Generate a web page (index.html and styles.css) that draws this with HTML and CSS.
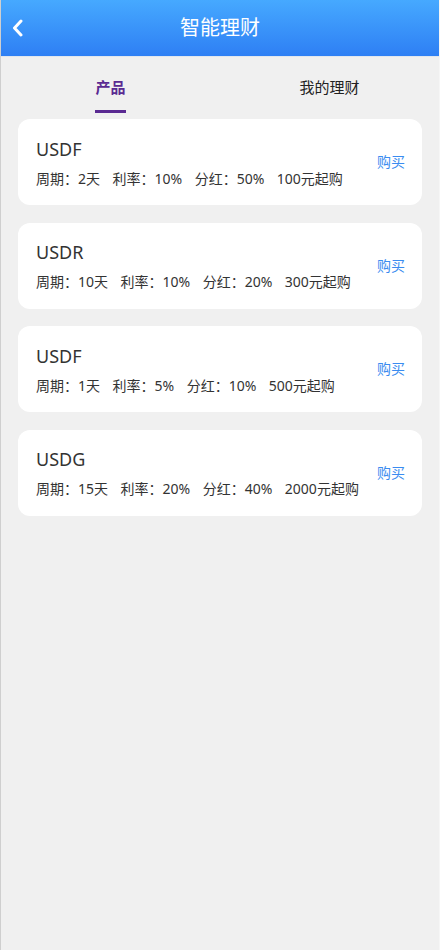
FILE: index.html
```html
<!DOCTYPE html>
<html lang="zh-CN">
<head>
<meta charset="utf-8">
<title>智能理财</title>
<link rel="stylesheet" href="styles.css">
</head>
<body>
<div class="page">
  <header class="topbar">
    <span class="back">
      <svg width="14" height="18" viewBox="0 0 14 18"><path d="M10 2 L3.5 9 L10 16" fill="none" stroke="#fff" stroke-width="3" stroke-linecap="round" stroke-linejoin="round"/></svg>
    </span>
    <h1 class="title">智能理财</h1>
  </header>
  <nav class="tabs">
    <div class="tab active"><span class="tab-label">产品</span></div>
    <div class="tab"><span class="tab-label">我的理财</span></div>
  </nav>
  <main class="list">
    <div class="card">
      <div class="info">
        <div class="name">USDF</div>
        <div class="detail"><span>周期：2天</span><span>利率：10%</span><span>分红：50%</span><span>100元起购</span></div>
      </div>
      <a class="buy">购买</a>
    </div>
    <div class="card">
      <div class="info">
        <div class="name">USDR</div>
        <div class="detail"><span>周期：10天</span><span>利率：10%</span><span>分红：20%</span><span>300元起购</span></div>
      </div>
      <a class="buy">购买</a>
    </div>
    <div class="card">
      <div class="info">
        <div class="name">USDF</div>
        <div class="detail"><span>周期：1天</span><span>利率：5%</span><span>分红：10%</span><span>500元起购</span></div>
      </div>
      <a class="buy">购买</a>
    </div>
    <div class="card">
      <div class="info">
        <div class="name">USDG</div>
        <div class="detail"><span>周期：15天</span><span>利率：20%</span><span>分红：40%</span><span>2000元起购</span></div>
      </div>
      <a class="buy">购买</a>
    </div>
  </main>
</div>
</body>
</html>
```
FILE: styles.css
```css
html, body {
  margin: 0;
  padding: 0;
  height: 100%;
}
body {
  background: #f0f0f0;
  font-family: "Noto Sans", "Noto Sans CJK SC", sans-serif;
  color: #333;
}
.page {
  min-height: 100%;
  border-left: 1px solid #cfcfcf;
  border-right: 1px solid #f6f6f6;
  box-sizing: border-box;
}
.topbar {
  height: 56px;
  background: linear-gradient(180deg, #46a9ff 0%, #2e7ff4 100%);
  border-bottom: 1px solid #dfe6ee;
  display: flex;
  align-items: center;
  justify-content: center;
  position: relative;
}
.back {
  position: absolute;
  left: 10px;
  top: 19px;
  display: flex;
}
.title {
  margin: 0;
  font-size: 20px;
  font-weight: normal;
  color: #fff;
  line-height: 28px;
}
.tabs {
  display: flex;
  height: 61px;
}
.tab {
  flex: 1;
  display: flex;
  justify-content: center;
  align-items: flex-start;
  padding-top: 19px;
  box-sizing: border-box;
}
.tab-label {
  font-size: 15px;
  line-height: 22px;
  color: #222;
  padding-bottom: 12px;
  border-bottom: 3px solid transparent;
}
.tab.active .tab-label {
  color: #5a2a92;
  font-weight: bold;
  border-bottom-color: #5a2a92;
}
.list {
  padding: 1px 17px 0 17px;
  display: flex;
  flex-direction: column;
  gap: 17.5px;
}
.card {
  background: #fff;
  border-radius: 12px;
  height: 86px;
  box-sizing: border-box;
  padding: 0 17px 0 18px;
  display: flex;
  align-items: center;
  justify-content: space-between;
}
.name {
  font-size: 18px;
  line-height: 28px;
  color: #333;
}
.detail {
  margin-top: 5px;
  font-size: 14px;
  line-height: 22px;
  color: #333;
  display: flex;
  gap: 12.5px;
}
.buy {
  font-size: 14px;
  color: #3a8cf0;
  line-height: 22px;
}
```
